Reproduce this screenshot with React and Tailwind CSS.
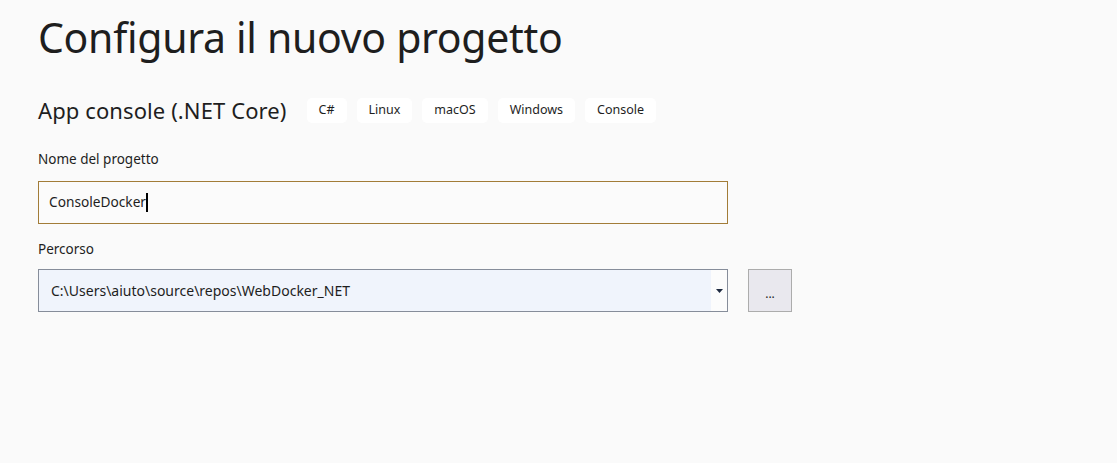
export default function App() {
  const tags = ["C#", "Linux", "macOS", "Windows", "Console"];

  return (
    <div
      className="min-h-[463px] w-full bg-[#fafafa] text-[#1e1e1e] pl-[38px] pt-[11px]"
      style={{ fontFamily: '"Noto Sans", "Open Sans", sans-serif' }}
    >
      <h1 className="text-[41px] leading-[52px] tracking-[-0.3px]">Configura il nuovo progetto</h1>

      <div className="mt-[34px] flex items-center h-[26px]">
        <span className="text-[22px] leading-[26px] mr-[20px] tracking-[0.1px]">App console (.NET Core)</span>
        <div className="flex gap-[10px]">
          {tags.map((t) => (
            <span
              key={t}
              className="h-[25px] px-[12px] flex items-center bg-white rounded-[5px] text-[12.5px] text-[#1e1e1e]"
            >
              {t}
            </span>
          ))}
        </div>
      </div>

      <div className="mt-[27px] text-[13.5px] leading-[18px]">Nome del progetto</div>
      <div className="mt-[13px] w-[690px] h-[43px] border border-[#a27c38] bg-[#fbfbfb] flex items-center pl-[10px] text-[13.7px]">
        <span>ConsoleDocker</span>
        <span className="w-[2px] h-[19px] bg-black"></span>
      </div>

      <div className="mt-[16px] text-[13.5px] leading-[18px]">Percorso</div>
      <div className="mt-[11px] flex gap-[20px]">
        <div className="w-[690px] h-[43px] border border-[#868d9a] flex">
          <div className="flex-1 bg-[#f0f4fc] flex items-center pl-[12px] text-[14px]">
            C:\Users\aiuto\source\repos\WebDocker_NET
          </div>
          <div className="w-[16px] bg-[#fcfcfc] flex items-center justify-center">
            <svg width="7" height="4" viewBox="0 0 7 4">
              <path d="M0 0h7L3.5 4z" fill="#1e2a40" />
            </svg>
          </div>
        </div>
        <button className="w-[44px] h-[43px] border border-[#acacac] bg-[#e9e8ee] text-[12px] leading-none flex items-center justify-center pt-[6px]">
          ...
        </button>
      </div>
    </div>
  );
}
